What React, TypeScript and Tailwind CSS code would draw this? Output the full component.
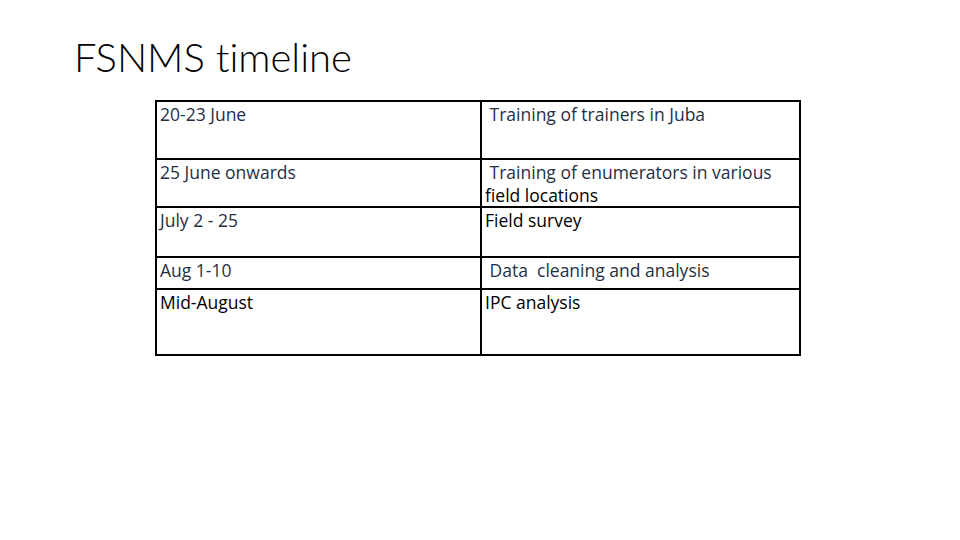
const rows = [
  { date: "20-23 June", task: " Training of trainers in Juba", h: "h-[58px]", dateDark: false, taskDark: false },
  { date: "25 June onwards", task: " Training of enumerators in various", extra: "field locations", h: "h-[48px]", dateDark: false, taskDark: false },
  { date: "July 2 - 25", task: "Field survey", h: "h-[50px]", dateDark: false, taskDark: true },
  { date: "Aug 1-10", task: " Data  cleaning and analysis", h: "h-[32px]", dateDark: false, taskDark: false },
  { date: "Mid-August", task: "IPC analysis", h: "h-[66px]", dateDark: true, taskDark: true },
];

export default function App() {
  return (
    <div className="w-[960px] h-[540px] bg-white relative overflow-hidden font-['Open_Sans',sans-serif]">
      <h1 className="pl-[74px] pt-[33px] text-[40px] leading-[48px] font-light text-black font-['Lato',sans-serif] [font-variant-ligatures:none]">
        FSNMS timeline
      </h1>
      <table className="ml-[155px] mt-[19px] w-[646px] border-collapse border-2 border-black text-[17.5px] leading-[23px]">
        <tbody>
          {rows.map((r) => (
            <tr key={r.date} className={r.h}>
              <td
                className={`w-[325px] border-2 border-black align-top pl-[3px] pt-[1px] whitespace-pre ${
                  r.dateDark ? "text-black" : "text-[#1f2f45]"
                }`}
              >
                {r.date}
              </td>
              <td
                className={`border-2 border-black align-top pl-[3px] pt-[1px] whitespace-pre ${
                  r.taskDark ? "text-black" : "text-[#1f2f45]"
                }`}
              >
                <div className="h-0 overflow-visible">
                  <div>{r.task}</div>
                  {r.extra && <div className="text-black">{r.extra}</div>}
                </div>
              </td>
            </tr>
          ))}
        </tbody>
      </table>
    </div>
  );
}
